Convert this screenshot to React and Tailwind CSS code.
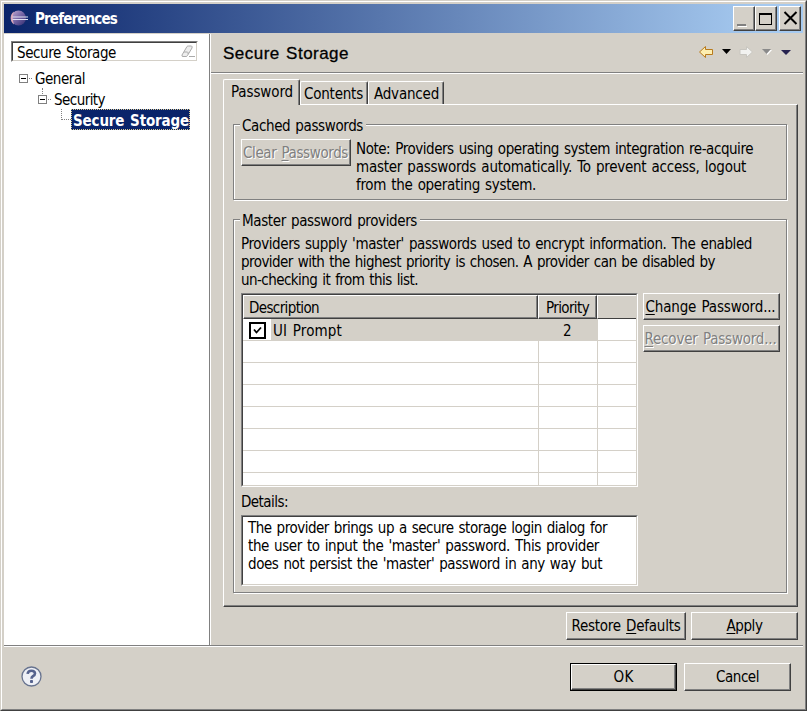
import React, { useLayoutEffect, useRef } from "react";

// A line of text whose tracking is adjusted to fill exactly `w` pixels. "&" marks a mnemonic.
function T({ w, children, className = "" }) {
  const ref = useRef(null);
  useLayoutEffect(() => {
    const el = ref.current;
    el.style.letterSpacing = "0px";
    const natural = el.getBoundingClientRect().width;
    el.style.letterSpacing = (w - natural) / el.textContent.length + "px";
  }, [w, children]);
  const i = children.indexOf("&");
  return (
    <span ref={ref} className={"inline-block whitespace-pre [word-spacing:1.2px] " + className}>
      {i < 0 ? children : (
        <>
          {children.slice(0, i)}
          <span className="underline decoration-1 underline-offset-2">{children[i + 1]}</span>
          {children.slice(i + 2)}
        </>
      )}
    </span>
  );
}

const raised =
  "border border-t-white border-l-white border-r-[#404040] border-b-[#404040] shadow-[inset_-1px_-1px_0_#808080] bg-[#d4d0c8]";
const sunken =
  "border border-t-[#808080] border-l-[#808080] border-r-white border-b-white";
const sunkenInner =
  "h-full border border-t-[#404040] border-l-[#404040] border-r-[#d4d0c8] border-b-[#d4d0c8] bg-white";

function Button({ children, w, disabled, className = "" }) {
  return (
    <button
      className={
        "flex shrink-0 items-center justify-center " + raised + " " +
        (disabled ? "text-[#808080] [text-shadow:1px_1px_0_#fff] " : "") + className
      }
    >
      <T w={w}>{children}</T>
    </button>
  );
}

function Group({ title, w, className = "", children }) {
  return (
    <fieldset className={"relative border border-[#808080] shadow-[1px_1px_0_#fff,inset_1px_1px_0_#fff] " + className}>
      <div className="absolute -top-[8px] left-[6px] bg-[#d4d0c8] pr-[3px] pl-[2px] leading-[18px]">
        <T w={w}>{title}</T>
      </div>
      {children}
    </fieldset>
  );
}

function Logo() {
  return (
    <svg width="20" height="18" viewBox="0 0 20 18">
      <defs>
        <linearGradient id="sphere" x1="0" y1="0" x2="1" y2="1">
          <stop offset="0" stopColor="#c4aed2" />
          <stop offset="0.5" stopColor="#7464a4" />
          <stop offset="1" stopColor="#2f2a6d" />
        </linearGradient>
      </defs>
      <circle cx="9.500" cy="8" r="7.500" fill="url(#sphere)" />
      <path d="M5 1.500A8 8 0 0 0 5 14.500Q2.500 8 5 1.500Z" fill="#dba9b8" />
      <path d="M3.500 7H19M3.500 9.500H19" stroke="#dfe0f2" strokeWidth="1.200" />
    </svg>
  );
}

function Expander() {
  return (
    <svg width="13" height="9" viewBox="0 0 13 9" className="shrink-0" shapeRendering="crispEdges">
      <rect x="0.500" y="0.500" width="8" height="8" fill="#fff" stroke="#808080" />
      <path d="M2 4.500H7" stroke="#000" />
      <path d="M10 4.500H13" stroke="#808080" strokeDasharray="1 1" />
    </svg>
  );
}

const note = [
  ["Note: Providers using operating system integration re-acquire", 397],
  ["master passwords automatically. To prevent access, logout", 390],
  ["from the operating system.", 180],
];
const intro = [
  ["Providers supply 'master' passwords used to encrypt information. The enabled", 511],
  ["provider with the highest priority is chosen. A provider can be disabled by", 474],
  ["un-checking it from this list.", 177],
];
const details = [
  ["The provider brings up a secure storage login dialog for", 359],
  ["the user to input the 'master' password. This provider", 351],
  ["does not persist the 'master' password in any way but", 354],
];

function Lines({ lines }) {
  return lines.map(([text, w]) => (
    <div key={text} className="h-[18px]"><T w={w}>{text}</T></div>
  ));
}

function TitleBar() {
  return (
    <div className="flex h-[29px] items-center bg-[linear-gradient(90deg,#0a246a,#a6caf0_95%)] pr-[2px] pl-[5px]">
      <Logo />
      <T w={82} className="ml-[6px] pt-[1px] font-bold text-white">Preferences</T>
      <div className="ml-auto flex">
        <button className={"h-[25px] w-[22px] " + raised}>
          <svg width="20" height="23" shapeRendering="crispEdges"><path d="M3 18h9" stroke="#808080" strokeWidth="2" /><path d="M4 19.500h9" stroke="#fff" /></svg>
        </button>
        <button className={"h-[25px] w-[22px] " + raised}>
          <svg width="20" height="23" shapeRendering="crispEdges"><path d="M3 7h13" stroke="#000" strokeWidth="2" /><rect x="3.500" y="6.500" width="12" height="11" fill="none" stroke="#000" /></svg>
        </button>
        <button className={"ml-[2px] h-[25px] w-[22px] " + raised}>
          <svg width="20" height="23"><path d="M4.500 5l12 12M16.500 5l-12 12" stroke="#000" strokeWidth="2" /></svg>
        </button>
      </div>
    </div>
  );
}

function Sidebar() {
  return (
    <div className="h-[611px] w-[205px] shrink-0 bg-white pt-[7px] pl-[7px]">
      <div className={"h-[21px] w-[187px] " + sunken}>
        <div className={"flex items-center justify-between pr-[1px] pl-[4px] " + sunkenInner}>
          <T w={99} className="pt-[2px]">Secure Storage</T>
          <svg width="14" height="14" viewBox="0 0 14 14" fill="#eee" stroke="#aaa">
            <path d="M1 10L6 1.500Q6.500 1 7.500 1H10.500Q11.500 1.500 11 3L6.500 10.500Q6 11.500 5 11.500H2Q.5 11.500 1 10Z" />
            <path d="M3 7h3.500q1 .5 .5 2M8 11.500h6" fill="none" />
          </svg>
        </div>
      </div>
      <div className="mt-[5px] flex h-[21px] items-center pt-[1px] pl-[8px]">
        <Expander /><T w={50} className="ml-[3px] pt-[2px]">General</T>
      </div>
      <div className="relative flex h-[21px] items-center pt-[1px] pl-[27px]">
        <div className="absolute top-0 left-[31px] h-[6px] border-l border-dotted border-[#808080]" />
        <Expander /><T w={51} className="ml-[3px] pt-[2px]">Security</T>
      </div>
      <div className="flex h-[21px] pl-[50px]">
        <div className="h-[11px] w-[10px] border-b border-l border-dotted border-[#808080]" />
        <div className="flex h-[21px] w-[119px] items-center border border-dotted border-[#d8c890] bg-[#0a246a] pl-[1px] font-bold text-white">
          <T w={116} className="pt-[2px]">Secure Storage</T>
        </div>
      </div>
    </div>
  );
}

function Nav() {
  return (
    <svg width="100" height="16" viewBox="0 0 100 16" className="mb-[4px]">
      <path d="M1.500 8L7.500 2.500V5.500H14.500V10.500H7.500V13.500Z" fill="#fdeeb0" stroke="#b87a1c" />
      <path d="M24 5h9l-4.500 5Z" fill="#000" />
      <path d="M54.500 8L48.500 2.500V5.500H42V10.500H48.500V13.500Z" fill="#f2f2f0" stroke="#c8c6c0" />
      <path d="M65 6h9l-4.500 5Z" fill="#fff" />
      <path d="M64 5h9l-4.500 5Z" fill="#8a8a8a" />
      <path d="M83 6h10l-5 5Z" fill="#26224f" />
    </svg>
  );
}

function Tab({ children, w, className }) {
  return (
    <div className={"rounded-t-[2px] border border-b-0 border-t-white border-l-white border-r-[#404040] bg-[#d4d0c8] shadow-[inset_-1px_0_0_#808080] " + className}>
      <T w={w}>{children}</T>
    </div>
  );
}

function Table() {
  const head = "h-[24px] border border-t-white border-l-white border-b-[#404040] border-r-[#404040] shadow-[inset_-1px_-1px_0_#808080]";
  return (
    <div className={"h-[194px] w-[397px] shrink-0 " + sunken}>
      <div className={"overflow-hidden " + sunkenInner}>
        <div className="flex bg-[#d4d0c8]">
          <div className={"flex w-[295px] items-center pt-[2px] pl-[5px] " + head}><T w={70}>Description</T></div>
          <div className={"flex w-[59px] items-center pt-[2px] pl-[7px] " + head}><T w={43}>Priority</T></div>
          <div className="h-[24px] flex-1 border border-r-0 border-t-white border-l-white border-b-[#404040]" />
        </div>
        {[0, 1, 2, 3, 4, 5, 6, 7].map((r) => (
          <div key={r} className="flex h-[22px]">
            {r === 0 ? (
              <>
                <div className="flex w-[28px] items-center border-b border-[#d4d0c8] pt-[1px] pl-[6px]">
                  <div className="flex h-[17px] w-[17px] items-center justify-center border-2 border-black">
                    <svg width="9" height="9" viewBox="0 0 9 9"><path d="M1 3.500L3.500 6.500L8 1.500" fill="none" stroke="#000" strokeWidth="1.800" /></svg>
                  </div>
                </div>
                <div className="flex w-[268px] items-center bg-[#d4d0c8] pt-[2px] pl-[2px]"><T w={69}>UI Prompt</T></div>
                <div className="flex w-[59px] items-center justify-center bg-[#d4d0c8] pt-[2px] pr-[2px]"><T w={9}>2</T></div>
              </>
            ) : (
              <>
                <div className="w-[296px] border-r border-b border-[#d4d0c8]" />
                <div className="w-[59px] border-r border-b border-[#d4d0c8]" />
              </>
            )}
            <div className="flex-1 border-b border-[#d4d0c8]" />
          </div>
        ))}
      </div>
    </div>
  );
}

function PasswordPage() {
  return (
    <div className="h-[503px] w-[575px] border border-t-white border-l-white border-r-[#404040] border-b-[#404040] pt-[19px] pl-[9px] shadow-[inset_-1px_-1px_0_#808080]">
      <Group title="Cached passwords" w={121} className="h-[76px] w-[554px]">
        <div className="flex pt-[14px] pl-[7px]">
          <Button disabled w={105} className="h-[27px] w-[110px] pr-[1px]">Clear &Passwords</Button>
          <div className="ml-[5px] pt-[1px]"><Lines lines={note} /></div>
        </div>
      </Group>
      <Group title="Master password providers" w={175} className="mt-[19px] h-[374px] w-[554px]">
        <div className="pt-[15px] pl-[7px]">
          <Lines lines={intro} />
          <div className="mt-[4px] flex">
            <Table />
            <div className="ml-[5px] flex flex-col gap-[5px]">
              <Button w={130} className="h-[27px] w-[137px] pr-[2px]">&Change Password...</Button>
              <Button disabled w={132} className="h-[27px] w-[137px] pr-[2px]">&Recover Password...</Button>
            </div>
          </div>
          <div className="mt-[6px] h-[22px]"><T w={47}>Details:</T></div>
          <div className={"h-[71px] w-[397px] " + sunken}>
            <div className={"pt-[2px] pl-[5px] " + sunkenInner}><Lines lines={details} /></div>
          </div>
        </div>
      </Group>
    </div>
  );
}

export default function App() {
  return (
    <div className="h-[711px] w-[807px] overflow-hidden border border-t-[#d4d0c8] border-l-[#d4d0c8] border-r-[#404040] border-b-[#404040] bg-[#d4d0c8] font-['DejaVu_Sans_Condensed','DejaVu_Sans',sans-serif] text-[15px] leading-[18px] text-black">
      <div className="h-full border border-t-white border-l-white border-r-[#808080] border-b-[#808080] p-[2px]">
        <TitleBar />
        <div className="flex pt-[1px]">
          <Sidebar />
          <div className="w-[2px] border-r border-l border-r-white border-l-[#808080]" />
          <div className="h-[611px] flex-1">
            <div className="flex h-[40px] items-center justify-between border-b border-white pr-[5px] pl-[12px] shadow-[inset_0_-1px_0_#808080]">
              <T w={126} className="pt-[1px] font-['Liberation_Sans',Arial,sans-serif] text-[17px] [-webkit-text-stroke:0.3px_#000]">Secure Storage</T>
              <Nav />
            </div>
            <div className="pt-[5px] pl-[12px]">
              <div className="flex items-end">
                <Tab w={62} className="relative -mb-px h-[26px] w-[77px] pt-[3px] pl-[7px]">Password</Tab>
                <Tab w={59} className="h-[23px] w-[68px] pt-[3px] pl-[3px]">Contents</Tab>
                <Tab w={65} className="h-[23px] w-[76px] pt-[3px] pl-[5px]">Advanced</Tab>
              </div>
              <PasswordPage />
              <div className="mt-[5px] flex justify-end gap-[5px] pr-[5px]">
                <Button w={109} className="h-[28px] w-[120px]">Restore &Defaults</Button>
                <Button w={36} className="h-[28px] w-[107px]">&Apply</Button>
              </div>
            </div>
          </div>
        </div>
        <div className="border-t border-b border-t-[#808080] border-b-white" />
        <div className="flex items-start pt-[16px] pr-[12px] pl-[17px]">
          <svg width="21" height="21" viewBox="0 0 21 21" className="mt-[3px]">
            <circle cx="10.500" cy="10.500" r="9.500" fill="#eef0f6" stroke="#67738f" strokeWidth="1.300" />
            <path d="M6.600 7.800Q7 4.700 10.500 4.700Q14 4.700 14 7.500Q14 9 12 10.200Q10.500 11.200 10.500 12.800" fill="none" stroke="#56638e" strokeWidth="2.600" />
            <rect x="9" y="14" width="3" height="3" rx="0.800" fill="#56638e" />
          </svg>
          <div className="ml-auto flex gap-[7px]">
            <div className="h-[28px] w-[107px] border border-black">
              <Button w={20} className="h-full w-full">OK</Button>
            </div>
            <Button w={43} className="h-[28px] w-[107px]">Cancel</Button>
          </div>
        </div>
      </div>
    </div>
  );
}
